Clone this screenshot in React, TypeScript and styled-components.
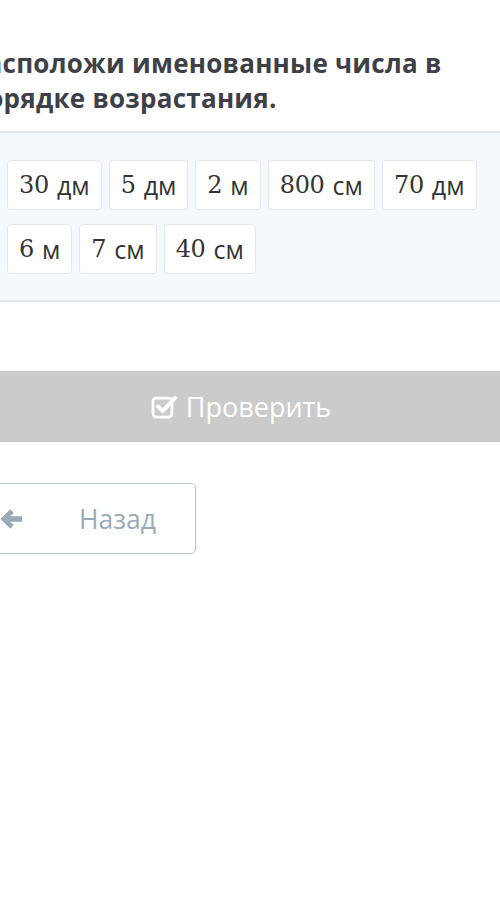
import React from 'react'
import styled, { createGlobalStyle } from 'styled-components'

const GlobalStyle = createGlobalStyle`
  html, body {
    margin: 0;
    padding: 0;
    background: #ffffff;
    overflow: hidden;
  }
  body {
    font-family: 'Open Sans', 'Liberation Sans', sans-serif;
  }
`

const Page = styled.div`
  width: 542px;
  margin-left: -30px;
  padding-top: 46px;
  display: flex;
  flex-direction: column;
`

const Title = styled.h2`
  margin: 0;
  padding: 0 0 15px 0;
  font-size: 26px;
  line-height: 35px;
  font-weight: 700;
  color: #3d4047;
  letter-spacing: 0.25px;
  white-space: nowrap;
`

const Panel = styled.div`
  background: #f5f8fc;
  border-top: 2px solid #e2e7ec;
  border-bottom: 2px solid #e2e7ec;
  padding: 27px 0 26px 37px;
  display: flex;
  flex-wrap: wrap;
  gap: 14px 7px;
`

const Chip = styled.div`
  height: 50px;
  box-sizing: border-box;
  padding: 0 11px;
  background: #ffffff;
  border: 1px solid #e4e7eb;
  border-radius: 4px;
  display: flex;
  align-items: center;
  gap: 8px;
  color: #333333;
`

const Num = styled.span`
  font-family: 'DejaVu Serif', 'Liberation Serif', serif;
  font-size: 24px;
  letter-spacing: -0.3px;
`

const Unit = styled.span`
  font-family: 'Open Sans', 'Liberation Sans', sans-serif;
  font-size: 25px;
`

const CheckButton = styled.button`
  margin-top: 69px;
  height: 71px;
  border: none;
  background: #cbcbcb;
  color: #ffffff;
  font-family: 'Open Sans', 'Liberation Sans', sans-serif;
  font-size: 27px;
  display: flex;
  align-items: center;
  justify-content: center;
  gap: 9px;
  padding: 0;
`

const BackRow = styled.div`
  padding-top: 41px;
  display: flex;
`

const BackButton = styled.button`
  width: 226px;
  height: 71px;
  box-sizing: border-box;
  border: 1.5px solid #b7c3ca;
  border-radius: 5px;
  background: #ffffff;
  color: #9aabb6;
  font-family: 'Open Sans', 'Liberation Sans', sans-serif;
  font-size: 26.5px;
  display: flex;
  align-items: center;
  padding: 0 0 0 29px;
  gap: 56px;
`

const CheckIcon = () => (
  <svg width="26" height="26" viewBox="0 0 24 24" fill="none">
    <rect x="1.8" y="3.8" width="17.5" height="17.5" rx="3" stroke="#fff" strokeWidth="2.6" />
    <path d="M6.5 11.5 L10.8 15.8 L22 3.8" stroke="#fff" strokeWidth="3.6" strokeLinecap="round" strokeLinejoin="round" />
  </svg>
)

const ArrowIcon = () => (
  <svg width="23" height="20" viewBox="0 0 23 20">
    <path
      d="M10.2 1.2 L1.4 10 L10.2 18.8 L13 16 L8.6 12.2 H21.5 V7.8 H8.6 L13 4 Z"
      fill="#9aabb6"
      stroke="#9aabb6"
      strokeWidth="1.2"
      strokeLinejoin="round"
    />
  </svg>
)

const items: [string, string][] = [
  ['30', 'дм'],
  ['5', 'дм'],
  ['2', 'м'],
  ['800', 'см'],
  ['70', 'дм'],
  ['6', 'м'],
  ['7', 'см'],
  ['40', 'см'],
]

export default function App() {
  return (
    <>
      <GlobalStyle />
      <Page>
        <Title>
          Расположи именованные числа в
          <br />
          порядке возрастания.
        </Title>
        <Panel>
          {items.map(([n, u], i) => (
            <Chip key={i}>
              <Num>{n}</Num>
              <Unit>{u}</Unit>
            </Chip>
          ))}
        </Panel>
        <CheckButton>
          <CheckIcon />
          Проверить
        </CheckButton>
        <BackRow>
          <BackButton>
            <ArrowIcon />
            Назад
          </BackButton>
        </BackRow>
      </Page>
    </>
  )
}
